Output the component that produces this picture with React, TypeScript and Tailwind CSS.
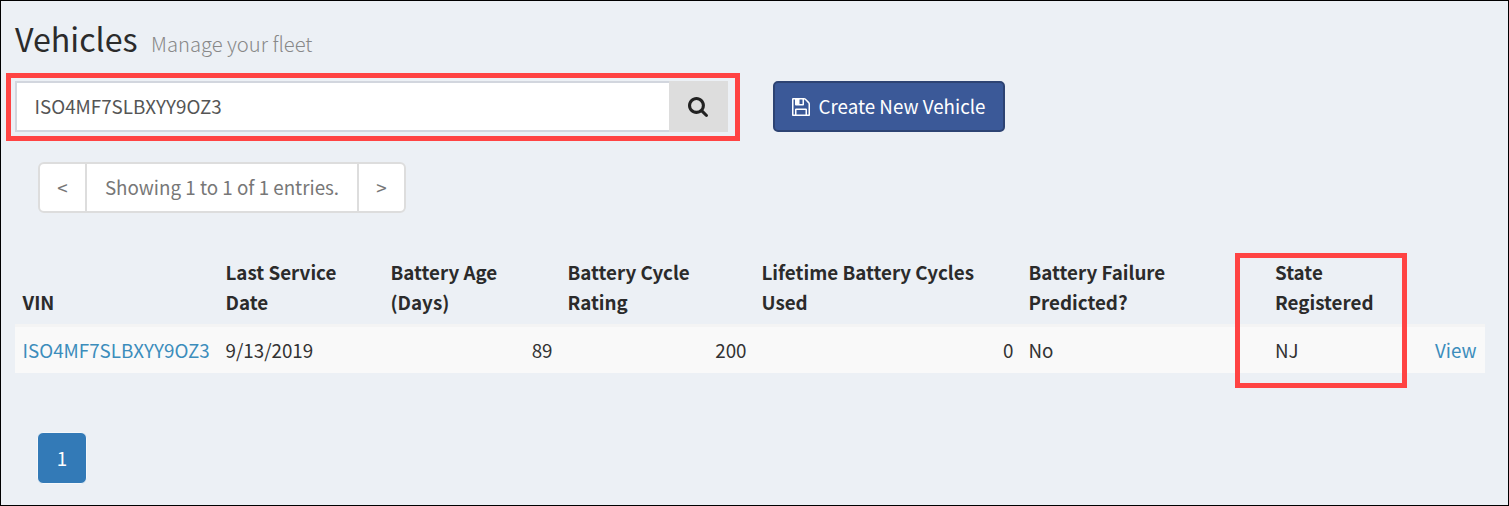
import React from "react";

const columns = [
  { label: "VIN", value: "ISO4MF7SLBXYY9OZ3", link: true, numeric: false },
  { label: "Last Service Date", value: "9/13/2019", link: false, numeric: false },
  { label: "Battery Age (Days)", value: "89", link: false, numeric: true },
  { label: "Battery Cycle Rating", value: "200", link: false, numeric: true },
  { label: "Lifetime Battery Cycles Used", value: "0", link: false, numeric: true },
  { label: "Battery Failure Predicted?", value: "No", link: false, numeric: false },
  { label: "State Registered", value: "NJ", link: false, numeric: false },
  { label: "", value: "View", link: true, numeric: false },
];

function SearchIcon() {
  return (
    <svg viewBox="0 128 1664 1664" className="size-[20px] fill-[#222]" aria-hidden="true">
      <path d="M1152 832q0-185-131.5-316.5T704 384 387.5 515.5 256 832t131.5 316.5T704 1280t316.5-131.5T1152 832zm512 832q0 52-38 90t-90 38q-54 0-90-38l-343-342q-179 124-399 124-143 0-273.5-55.5t-225-150-150-225T0 832t55.5-273.5 150-225 225-150T704 128t273.5 55.5 225 150 150 225T1408 832q0 220-124 399l343 343q37 37 37 90z" />
    </svg>
  );
}

function SaveIcon() {
  return (
    <svg viewBox="0 128 1536 1536" className="size-[18px] fill-white" aria-hidden="true">
      <path d="M384 1536h768v-384H384zm896 0h128V640q0-14-10-38.5t-20-34.5l-281-281q-10-10-34-20t-39-10v416q0 40-28 68t-68 28H352q-40 0-68-28t-28-68V256H128v1280h128v-416q0-40 28-68t68-28h832q40 0 68 28t28 68zM896 608V288q0-13-9.500-22.500T864 256H672q-13 0-22.500 9.500T640 288v320q0 13 9.500 22.500T672 640h192q13 0 22.500-9.500T896 608zm640 32v928q0 40-28 68t-68 28H96q-40 0-68-28t-28-68V224q0-40 28-68t68-28h928q40 0 88 20t76 48l280 280q28 28 48 76t20 88z" />
    </svg>
  );
}

export default function App() {
  return (
    <main className="relative h-[506px] w-[1509px] overflow-hidden border border-black bg-[#ecf0f5] font-['Noto_Sans_CJK_SC',sans-serif] text-[18.8px] leading-[30px] text-[#333]">
      <header className="flex h-[72px] items-baseline pl-[14px] pt-[16px]">
        <h1 className="w-[136px] text-[32.200px] leading-[42px] text-[#2b2b2b]">Vehicles</h1>
        <span className="text-[20.200px] font-light leading-[30px] text-[#888]">Manage your fleet</span>
      </header>

      <section className="flex items-start pl-[5px]">
        <div className="flex h-[68px] w-[734px] border-[5px] border-[#ff4343] pl-[4px] pt-[3px]">
          <div className="flex h-[51px] w-[654px] items-center border-2 border-r-0 border-[#d2d6de] bg-white pb-[2px] pl-[17.500px] text-[#555]">
            ISO4MF7SLBXYY9OZ3
          </div>
          <button className="flex h-[51px] w-[59px] items-center justify-center bg-[#ddd] pr-[2px]">
            <SearchIcon />
          </button>
        </div>
        <button className="ml-[33px] mt-[8px] flex h-[51px] w-[232px] items-center rounded-[5px] border-2 border-[#2d4373] bg-[#3b5998] pl-[17px] text-white">
          <SaveIcon />
          <span className="ml-[8.500px] whitespace-nowrap pb-px">Create New Vehicle</span>
        </button>
      </section>

      <nav className="ml-[37px] mt-[21px] flex h-[51px] w-[368px] divide-x-2 divide-[#ddd] overflow-hidden rounded-[6px] border-2 border-[#ddd] bg-white text-[#777]">
        <span className="flex w-[47px] items-center justify-center pb-[2px]">&lt;</span>
        <span className="flex w-[272px] items-center justify-center whitespace-nowrap pb-[2px]">Showing 1 to 1 of 1 entries.</span>
        <span className="flex flex-1 items-center justify-center pb-[2px]">&gt;</span>
      </nav>

      <table className="ml-[14px] mt-[35px] w-[1470px] table-fixed border-collapse">
        <colgroup>
          <col className="w-[203px]" />
          <col className="w-[165px]" />
          <col className="w-[177px]" />
          <col className="w-[194px]" />
          <col className="w-[267px]" />
          <col className="w-[246.500px]" />
          <col className="w-[160px]" />
          <col />
        </colgroup>
        <thead>
          <tr className="h-[77px]">
            {columns.map((column) => (
              <th key={column.value} className="px-[7.5px] pb-[7px] text-left align-bottom font-bold text-[#2b2b2b]">
                {column.label}
              </th>
            ))}
          </tr>
        </thead>
        <tbody>
          <tr className="h-[48px] border-t-[3px] border-[#f4f4f4] bg-[#f9f9f9]">
            {columns.map((column) => (
              <td key={column.value} className={column.numeric ? "whitespace-nowrap px-[7.5px] pt-px text-right" : "whitespace-nowrap px-[7.5px] pt-px"}>
                {column.link ? <a className="text-[#3c8dbc]">{column.value}</a> : column.value}
              </td>
            ))}
          </tr>
        </tbody>
      </table>

      <button className="ml-[36px] mt-[59px] flex h-[52px] w-[50px] items-center justify-center rounded-[6px] border border-[#f5f8fb] bg-[#337ab7] text-white">
        1
      </button>

      <div className="pointer-events-none absolute left-[1234px] top-[252px] h-[135px] w-[172px] border-[5px] border-[#ff4343]" />
    </main>
  );
}
